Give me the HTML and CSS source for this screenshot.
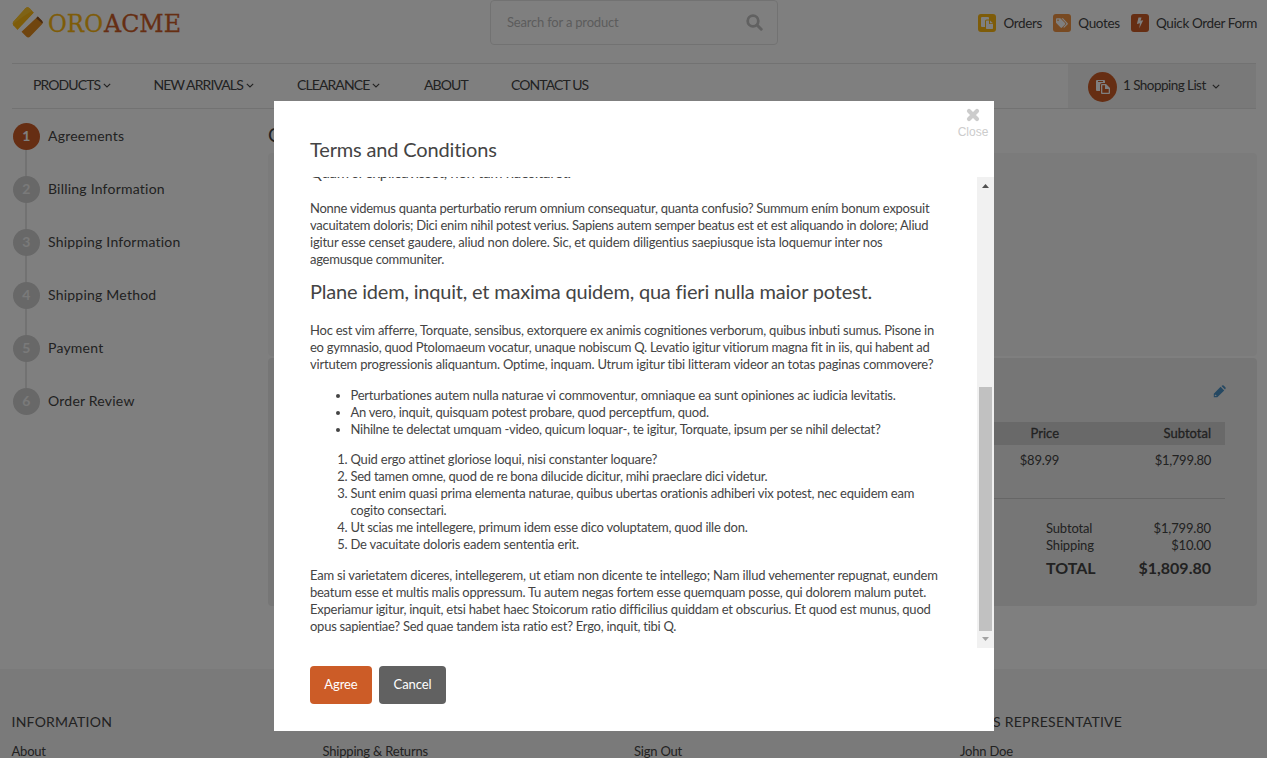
FILE: index.html
```html
<!DOCTYPE html>
<html lang="en">
<head>
<meta charset="utf-8">
<title>Checkout - Terms and Conditions</title>
<link rel="stylesheet" href="styles.css">
</head>
<body>
<svg class="defs" width="0" height="0">
  <symbol id="paste" viewBox="0 0 14 14"><path fill-rule="evenodd" d="M0 1Q0 0 1 0H8Q9 0 9 1V3H6Q4 3 4 5V11H1Q0 11 0 10ZM2 1V2H7V1Z"/><path fill-rule="evenodd" d="M5 5Q5 4 6 4H10L14 8V13Q14 14 13 14H6Q5 14 5 13ZM6.3 5.3V12.7H12.7V9H9V5.3Z"/></symbol>
  <symbol id="paste-solid" viewBox="0 0 12 12"><path d="M0 1Q0 0 1 0H7Q8 0 8 1V2.5H5.5Q4 2.5 4 4V10H1Q0 10 0 9Z"/><path d="M5 4.2Q5 3.5 5.7 3.5H8V7H12V11.3Q12 12 11.3 12H5.7Q5 12 5 11.3ZM9 3.5 12 6.2H9Z"/></symbol>
  <symbol id="chevron" viewBox="0 0 8 5"><path d="M.8.8 4 4 7.2.8" fill="none" stroke="currentColor" stroke-width="1.1"/></symbol>
</svg>
<div class="page">
  <header class="header">
    <svg class="logo" width="172" height="34" viewBox="0 0 172 34">
      <path d="M13.5 2.2Q15.5.2 17.5 2.2L22 6.7 5.6 24 1.2 19.2Q0 17.5 1.3 15.7Z" fill="#fdb914"/>
      <path d="M13.5 2.2Q15.5.2 17.5 2.2L20 4.7Q11 10 1.2 18 .2 17 1.3 15.7Z" fill="#ffc72c"/>
      <path d="M22 6.7 25.8 10.4 9.5 25.8 5.6 24Z" fill="#fff"/>
      <path d="M25.8 10.4 30 14.7Q31.6 16.5 30 18.2L18.2 30.4Q16.2 32.4 14.2 30.4L9.5 25.8Z" fill="#e18a1e"/>
      <path d="M25.8 10.4 30 14.7Q31.4 16.2 30.4 17.4L24.2 12.2Z" fill="#8c5224"/>
      <text class="logo-text" x="36" y="26" textLength="55" lengthAdjust="spacingAndGlyphs" fill="#fdb913" stroke="#fdb913">ORO</text>
      <text class="logo-text" x="92" y="26" textLength="77" lengthAdjust="spacingAndGlyphs" fill="#cc5c27" stroke="#cc5c27">ACME</text>
    </svg>
    <div class="search"><span>Search for a product</span>
      <svg width="17" height="17" viewBox="0 0 17 17"><circle cx="7" cy="7" r="5.3" fill="none" stroke="#c2c2c2" stroke-width="2.8"/><path d="m11 11 4.2 4.2" stroke="#c2c2c2" stroke-width="3" stroke-linecap="round"/></svg>
    </div>
    <div class="quick">
      <a><i class="tile yellow"><svg width="12" height="12"><use href="#paste-solid"/></svg></i><span>Orders</span></a>
      <a><i class="tile orange"><svg width="12" height="11" viewBox="0 0 12 11"><path fill-rule="evenodd" d="M0 1Q0 .3.8.3H4.3L9 5Q9.8 5.7 9 6.5L6 9.6Q5.3 10.2 4.6 9.5L0 4.8ZM2 1.4a.8.8 0 1 0 .1 0Z"/><path d="M5.4.3H7L11.5 5Q12.2 5.7 11.5 6.5L8.2 9.8 7.2 9.3 10 6.3Q10.6 5.7 10 5Z"/></svg></i><span>Quotes</span></a>
      <a><i class="tile red"><svg width="8" height="12" viewBox="0 0 8 12"><path d="M2.5.5H5.5L4.5 3.8 7.2 3.2 3.2 11.5 4 6.2.9 6.9Z"/></svg></i><span>Quick Order Form</span></a>
    </div>
  </header>
  <nav class="nav">
    <a class="n1">PRODUCTS<svg width="8" height="5"><use href="#chevron"/></svg></a>
    <a class="n2">NEW ARRIVALS<svg width="8" height="5"><use href="#chevron"/></svg></a>
    <a class="n3">CLEARANCE<svg width="8" height="5"><use href="#chevron"/></svg></a>
    <a class="n4">ABOUT</a>
    <a class="n5">CONTACT US</a>
    <div class="cart"><i class="disc"><svg width="14" height="14"><use href="#paste"/></svg></i><span>1 Shopping List</span><svg width="8" height="5"><use href="#chevron"/></svg></div>
  </nav>
  <div class="main">
    <ol class="steps">
      <li class="active"><b>1</b><span>Agreements</span></li>
      <li><b>2</b><span>Billing Information</span></li>
      <li><b>3</b><span>Shipping Information</span></li>
      <li><b>4</b><span>Shipping Method</span></li>
      <li><b>5</b><span>Payment</span></li>
      <li><b>6</b><span>Order Review</span></li>
    </ol>
    <div class="content">
      <h1>Checkout</h1>
      <section class="form"></section>
      <section class="summary">
        <div class="edit"><svg width="13" height="13" viewBox="0 0 13 13"><path fill="#4a90c4" fill-rule="evenodd" d="M7.6 1.8 11.2 5.4 4.3 12.2H.8V8.7ZM8.5.9 9.2.4Q10 0 10.6.5L12.4 2.3Q13 3 12.5 3.8L12 4.5ZM2 9.4 1.7 11H3.2L3.7 10.6Z"/></svg></div>
        <div class="row head"><span>Price</span><span>Subtotal</span></div>
        <div class="row item"><span>$89.99</span><span>$1,799.80</span></div>
        <div class="totals">
          <div><span>Subtotal</span><span>$1,799.80</span></div>
          <div><span>Shipping</span><span>$10.00</span></div>
          <div class="grand"><span>TOTAL</span><span>$1,809.80</span></div>
        </div>
      </section>
    </div>
  </div>
  <footer class="footer">
    <div><h4>INFORMATION</h4><a>About</a></div>
    <div><h4>SERVICE</h4><a>Shipping &amp; Returns</a></div>
    <div><h4>ACCOUNT</h4><a>Sign Out</a></div>
    <div><h4>SALES REPRESENTATIVE</h4><a>John Doe</a></div>
  </footer>
</div>
<div class="overlay">
  <div class="modal">
    <div class="close"><svg width="14" height="14" viewBox="0 0 14 14"><path d="m3 3 8 8M11 3l-8 8" stroke="#ccc" stroke-width="4.2" stroke-linecap="round"/></svg><span>Close</span></div>
    <h2>Terms and Conditions</h2>
    <div class="scroller">
      <div class="terms">
        <p class="clipped">Quam si explicavisset, non tam haesitaret.</p>
        <p class="tight">Nonne videmus quanta perturbatio rerum omnium consequatur, quanta confusio? Summum ením bonum exposuit<br>vacuitatem doloris; Dici enim nihil potest verius. Sapiens autem semper beatus est et est aliquando in dolore; Aliud<br><span class="loose">igitur esse censet gaudere, aliud non dolere. Sic, et quidem diligentius saepiusque ista loquemur inter nos</span><br>agemusque communiter.</p>
        <h3>Plane idem, inquit, et maxima quidem, qua fieri nulla maior potest.</h3>
        <p>Hoc est vim afferre, Torquate, sensibus, extorquere ex animis cognitiones verborum, quibus inbuti sumus. Pisone in<br><span class="tight">eo gymnasio, quod Ptolomaeum vocatur, unaque nobiscum Q. Levatio igitur vitiorum magna fit in iis, qui habent ad</span><br><span class="loose">virtutem progressionis aliquantum. Optime, inquam. Utrum igitur tibi litteram videor an totas paginas commovere?</span></p>
        <ul>
          <li>Perturbationes autem nulla naturae vi commoventur, omniaque ea sunt opiniones ac iudicia levitatis.</li>
          <li class="tight">An vero, inquit, quisquam potest probare, quod perceptfum, quod.</li>
          <li class="tight">Nihilne te delectat umquam -video, quicum loquar-, te igitur, Torquate, ipsum per se nihil delectat?</li>
        </ul>
        <ol>
          <li class="loose">Quid ergo attinet gloriose loqui, nisi constanter loquare?</li>
          <li class="tight">Sed tamen omne, quod de re bona dilucide dicitur, mihi praeclare dici videtur.</li>
          <li>Sunt enim quasi prima elementa naturae, quibus ubertas orationis adhiberi vix potest, nec equidem eam<br>cogito consectari.</li>
          <li class="tight">Ut scias me intellegere, primum idem esse dico voluptatem, quod ille don.</li>
          <li class="loose">De vacuitate doloris eadem sententia erit.</li>
        </ol>
        <p><span class="loose">Eam si varietatem diceres, intellegerem, ut etiam non dicente te intellego; Nam illud vehementer repugnat, eundem</span><br><span class="tight">beatum esse et multis malis oppressum. Tu autem negas fortem esse quemquam posse, qui dolorem malum putet.</span><br>Experiamur igitur, inquit, etsi habet haec Stoicorum ratio difficilius quiddam et obscurius. Et quod est munus, quod<br><span class="tight">opus sapientiae? Sed quae tandem ista ratio est? Ergo, inquit, tibi Q.</span></p>
      </div>
      <div class="bar"><svg width="7" height="4"><path d="M0 4 3.5 0 7 4Z" fill="#505050"/></svg><div class="thumb"></div><svg width="7" height="4"><path d="M0 0h7L3.5 4Z" fill="#a3a3a3"/></svg></div>
    </div>
    <div class="actions"><button class="agree">Agree</button><button class="cancel">Cancel</button></div>
  </div>
</div>
</body>
</html>
```
FILE: styles.css
```css
* { box-sizing: border-box; margin: 0; padding: 0; }
body { width: 1267px; height: 758px; overflow: hidden; background: #fff; color: #444; font: 13px/17px Lato, sans-serif; white-space: nowrap; }
.defs { display: block; height: 0; }
.page { height: 758px; display: flex; flex-direction: column; overflow: hidden; }
svg { display: block; flex: none; }
i { font-style: normal; }
.tile svg, .disc svg { fill: #fff; }

.header { height: 63px; flex: none; display: flex; padding: 0 10px 0 12px; }
.logo { margin-top: 6px; }
.logo-text { font: 25px "DejaVu Serif", serif; stroke-width: .3px; }
.search { width: 288px; height: 45px; margin-left: 306px; border: 1px solid #e5e5e5; border-radius: 4px; display: flex; justify-content: space-between; align-items: center; padding: 0 14px 0 16px; color: #b9b9b9; letter-spacing: -.2px; }
.quick { margin-left: auto; display: flex; gap: 11px; padding-top: 14px; height: 32px; }
.quick a { display: flex; align-items: center; gap: 7.4px; font-size: 13.5px; letter-spacing: -.38px; }
.tile { width: 18px; height: 18px; border-radius: 3px; display: flex; align-items: center; justify-content: center; }
.yellow { background: #fdb913; }
.orange { background: #f09445; }
.red { background: #cc5c27; }

.nav { height: 46px; flex: none; margin: 0 11px 0 12px; border-top: 1px solid #e5e5e5; border-bottom: 1px solid #e5e5e5; display: flex; padding-left: 21px; font-size: 14px; letter-spacing: -.9px; }
.nav a { display: flex; align-items: center; gap: 3px; padding-bottom: 4px; }
.nav a svg { margin-top: 2px; }
.n1 { width: 120.5px; }
.n2 { width: 143.5px; }
.n3 { width: 127px; }
.n4 { width: 87px; }
.cart { margin-left: auto; width: 188px; background: #f2f2f2; display: flex; align-items: center; padding-left: 20px; letter-spacing: -.55px; font-size: 13.5px; }
.disc { width: 29px; height: 30px; border-radius: 50%; background: #cc5c27; display: flex; align-items: center; justify-content: center; margin-right: 6px; margin-top: 2px; }
.cart span { margin-right: 6px; padding-bottom: 2px; }

.main { height: 560px; flex: none; display: flex; padding: 14px 10px 0 13px; }
.steps { width: 255px; list-style: none; }
.steps li { height: 53px; display: flex; gap: 8px; font-size: 14px; background: linear-gradient(#e5e5e5, #e5e5e5) 12px 0 / 2px 53px no-repeat; line-height: 25px; letter-spacing: .22px; }
.steps li:last-child { background: none; }
.steps b { width: 27px; height: 27px; border-radius: 50%; background: #d0d0d0; color: #fff; text-align: center; }
.steps li:not(.active) b { color: #f4f4f4; }
.steps .active b { background: #cc5c27; }
.content { flex: 1; }
.content h1 { font-size: 19px; font-weight: 400; height: 30px; line-height: 23px; }
.form { height: 203px; background: #f6f6f6; border-radius: 4px; margin-bottom: 2px; }
.summary { height: 248px; background: #ececec; border-radius: 4px; padding: 27px 32px 0; }
.edit { height: 37px; display: flex; justify-content: flex-end; margin-right: -1px; }
.row { display: flex; justify-content: flex-end; padding-right: 14px; }
.row span { width: 152px; text-align: right; }
.head { height: 23px; line-height: 23px; background: #d3d3d3; -webkit-text-stroke: .3px #444; }
.item { height: 54px; line-height: 31px; border-bottom: 1px solid #ccc; letter-spacing: -.27px; }
.totals { margin: 21px 14px 0 auto; width: 165px; letter-spacing: -.15px; }
.totals div { display: flex; justify-content: space-between; }
.totals .grand { font-size: 16px; font-weight: 700; line-height: 28px; letter-spacing: 0; }

.footer { flex: 1; background: #f4f4f4; padding: 44px 12px 0 11.5px; display: grid; grid-template-columns: 311px 311.5px 326px 1fr; letter-spacing: -.2px; }
.footer h4 { font-size: 14px; font-weight: 400; line-height: 18px; margin-bottom: 12px; letter-spacing: .24px; }

.overlay { position: fixed; inset: 0; background: rgba(0, 0, 0, .5); padding: 101px 273px 0 274px; }
.modal { position: relative; height: 630px; background: #fff; padding: 35px 0 0 36px; }
.close { position: absolute; right: 6px; top: 7px; width: 30px; display: flex; flex-direction: column; align-items: center; color: #ccc; font: 12px/21px "Liberation Sans", sans-serif; }
.modal h2 { font-size: 20px; font-weight: 400; line-height: 26px; height: 41px; letter-spacing: -.15px; }
.scroller { height: 471px; overflow: hidden; display: flex; justify-content: space-between; }
.terms { margin-top: -13px; letter-spacing: -.23px; }
.terms p { margin-bottom: 14px; }
.terms .tight { letter-spacing: -.26px; }
.terms .loose { letter-spacing: -.2px; }
.terms .clipped { margin-bottom: 19px; font-size: 15px; letter-spacing: -.33px; }
.terms h3 { font-size: 20px; font-weight: 400; line-height: 26px; letter-spacing: -.2px; margin: -4px 0 18px; }
.terms ul { padding-left: 40.5px; margin-bottom: 13px; }
.terms ol { padding-left: 40.5px; margin-bottom: 14px; }
.bar { width: 17px; background: #f1f1f1; display: flex; flex-direction: column; align-items: center; padding: 7px 0; }
.thumb { width: 13px; height: 244px; margin: 199px 0 6px; background: #c1c1c1; }
.actions { display: flex; gap: 7px; margin-top: 18px; }
button { height: 38px; border: 0; border-radius: 4px; color: #fff; font: 13px Lato, sans-serif; letter-spacing: -.1px; padding-bottom: 2px; }
.agree { width: 62px; background: #cc5c27; }
.cancel { width: 67px; background: #616161; }
```
